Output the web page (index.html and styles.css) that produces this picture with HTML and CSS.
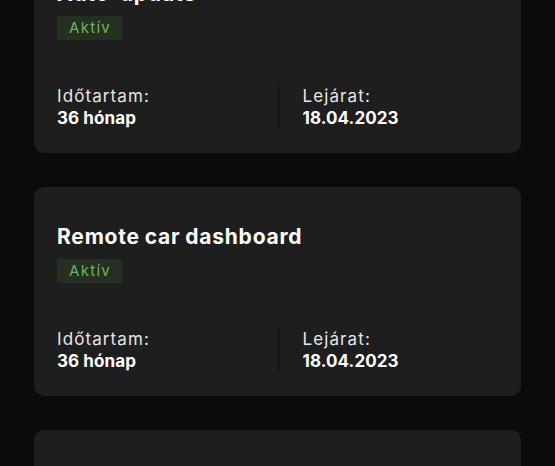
FILE: index.html
```html
<!DOCTYPE html>
<html lang="hu">
<head>
    <meta charset="UTF-8">
    <meta name="viewport" content="width=device-width, initial-scale=1.0">
    <title>Előfizetések</title>
    <link rel="stylesheet" href="styles.css">
</head>
<body>
    <div class="list">
        <div class="card">
            <h2 class="card-title">Auto-update</h2>
            <span class="badge">Aktív</span>
            <div class="stats">
                <div class="stat">
                    <span class="stat-label">Időtartam:</span>
                    <span class="stat-value">36 hónap</span>
                </div>
                <div class="stat">
                    <span class="stat-label">Lejárat:</span>
                    <span class="stat-value">18.04.2023</span>
                </div>
            </div>
        </div>
        <div class="card">
            <h2 class="card-title">Remote car dashboard</h2>
            <span class="badge">Aktív</span>
            <div class="stats">
                <div class="stat">
                    <span class="stat-label">Időtartam:</span>
                    <span class="stat-value">36 hónap</span>
                </div>
                <div class="stat">
                    <span class="stat-label">Lejárat:</span>
                    <span class="stat-value">18.04.2023</span>
                </div>
            </div>
        </div>
        <div class="card">
            <h2 class="card-title">Navigation</h2>
            <span class="badge">Aktív</span>
            <div class="stats">
                <div class="stat">
                    <span class="stat-label">Időtartam:</span>
                    <span class="stat-value">36 hónap</span>
                </div>
                <div class="stat">
                    <span class="stat-label">Lejárat:</span>
                    <span class="stat-value">18.04.2023</span>
                </div>
            </div>
        </div>
    </div>
</body>
</html>
```

FILE: styles.css
```css
body {
    font-family: 'Inter', sans-serif;
    background-color: #0b0b0b;
    color: #f2f2f2;
    margin: 0;
    padding: 0;
    overflow: hidden;
}
.list {
    display: flex;
    flex-direction: column;
    gap: 34px;
    padding: 0 34px;
    margin-top: -56px;
}
.card {
    background-color: #1e1e1e;
    border-radius: 10px;
    padding: 36px 23px 24px;
    display: flex;
    flex-direction: column;
    align-items: flex-start;
}
.card-title {
    margin: 0;
    font-size: 21px;
    line-height: 28px;
    font-weight: 700;
    color: #ffffff;
    letter-spacing: 0.8px;
    word-spacing: -1px;
}
.badge {
    margin-top: 8px;
    background-color: #252f22;
    color: #6cb35c;
    font-size: 15px;
    line-height: 24px;
    padding: 0 11px 0 12px;
    letter-spacing: 1.3px;
}
.stats {
    margin-top: 45px;
    width: 100%;
    display: grid;
    grid-template-columns: 1fr 1fr;
}
.stat {
    display: flex;
    flex-direction: column;
    font-size: 17px;
    line-height: 22px;
}
.stat + .stat {
    border-left: 1px solid #0d0d0d;
    padding-left: 24px;
}
.stat-label {
    color: #e6e6e6;
    letter-spacing: 1.1px;
}
.stat-value {
    font-weight: 700;
    color: #ffffff;
    letter-spacing: 0.1px;
}
```
